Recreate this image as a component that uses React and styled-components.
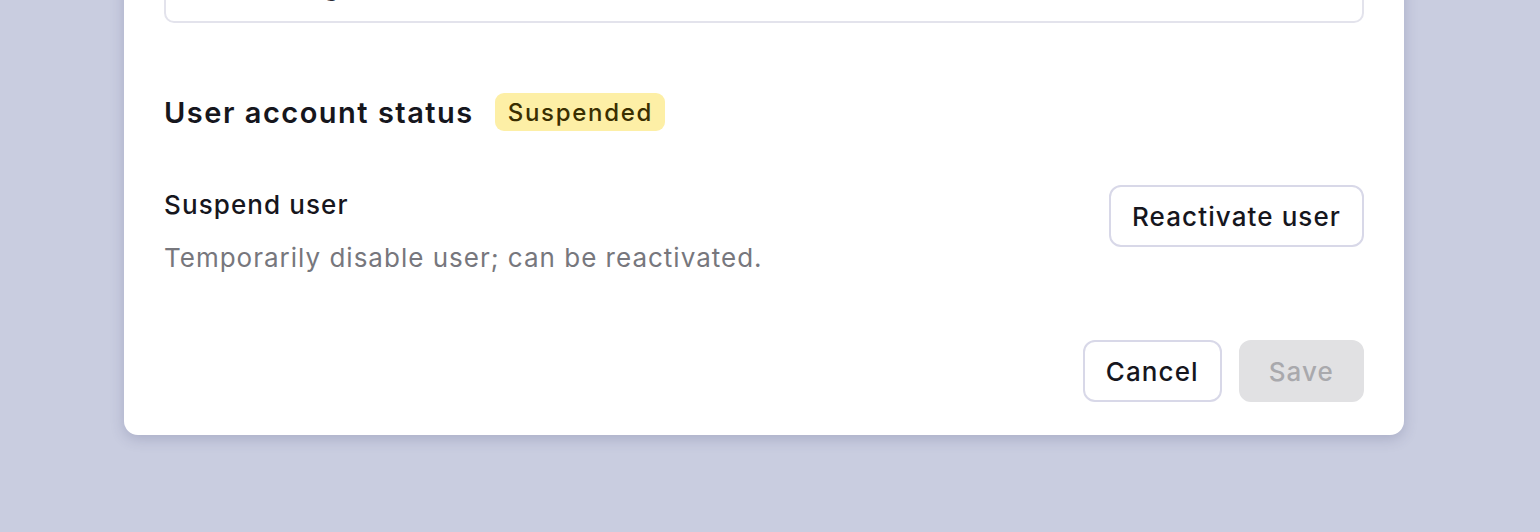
import React from "react";
import styled, { createGlobalStyle } from "styled-components";

const GlobalStyle = createGlobalStyle`
  html, body {
    margin: 0;
    padding: 0;
    background: #c9cde0;
    font-family: Inter, "Noto Sans", "Liberation Sans", sans-serif;
    color: #16161d;
  }
  #root {
    height: 532px;
    overflow: hidden;
  }
`;

const Page = styled.div`
  height: 532px;
  padding: 0 136px 0 124px;
  box-sizing: border-box;
  overflow: hidden;
`;

const Card = styled.div`
  margin-top: -79px;
  background: #fff;
  border-radius: 14px;
  padding: 40px 40px 33px;
  box-shadow: 0 4px 14px rgba(60, 64, 110, 0.22);
  display: flex;
  flex-direction: column;
`;

const Input = styled.input`
  height: 62px;
  box-sizing: border-box;
  border: 2px solid #e3e3ec;
  border-radius: 10px;
  padding: 0 24px 13px;
  font: inherit;
  font-size: 26px;
  color: #2a2a33;
  outline: none;
  background: #fff;
`;

const Section = styled.section`
  margin-top: 70px;
  display: flex;
  flex-direction: column;
  gap: 54px;
`;

const Heading = styled.div`
  display: flex;
  align-items: center;
  gap: 21px;
  height: 38px;
`;

const Title = styled.h3`
  margin: 0;
  font-size: 29px;
  font-weight: 600;
  letter-spacing: 1.5px;
  color: #16161d;
`;

const Badge = styled.span`
  display: inline-flex;
  align-items: center;
  height: 38px;
  padding: 0 12px 0 13px;
  border-radius: 9px;
  background: ${({ $tone }) => ($tone === "warn" ? "#fdefa6" : "#e6e6ee")};
  color: ${({ $tone }) => ($tone === "warn" ? "#3a2e00" : "#333")};
  font-size: 24px;
  font-weight: 500;
  letter-spacing: 1.7px;
`;

const Row = styled.div`
  display: flex;
  justify-content: space-between;
  align-items: flex-start;
`;

const Info = styled.div`
  display: flex;
  flex-direction: column;
  gap: 19px;
`;

const Label = styled.div`
  font-size: 26px;
  font-weight: 500;
  line-height: 34px;
  margin-top: 3px;
  letter-spacing: 1.1px;
  color: #16161d;
`;

const Hint = styled.div`
  font-size: 26px;
  line-height: 34px;
  letter-spacing: 1px;
  color: #77777d;
`;

const Footer = styled.div`
  margin-top: 65px;
  display: flex;
  justify-content: flex-end;
  gap: 17px;
`;

const Button = styled.button`
  height: 62px;
  box-sizing: border-box;
  padding: 0 ${({ $pad }) => $pad || 20}px;
  border-radius: 12px;
  font: inherit;
  font-size: 26px;
  font-weight: 500;
  letter-spacing: 1.1px;
  cursor: pointer;
  border: 2px solid ${({ disabled }) => (disabled ? "#e1e1e3" : "#d8d8e8")};
  background: ${({ disabled }) => (disabled ? "#e1e1e3" : "#fff")};
  color: ${({ disabled }) => (disabled ? "#a9a9ad" : "#16161d")};
`;

export default function App() {
  return (
    <>
      <GlobalStyle />
      <Page>
        <Card>
          <Input defaultValue="jenny.young@company.io" readOnly />
          <Section>
            <Heading>
              <Title>User account status</Title>
              <Badge $tone="warn">Suspended</Badge>
            </Heading>
            <Row>
              <Info>
                <Label>Suspend user</Label>
                <Hint>Temporarily disable user; can be reactivated.</Hint>
              </Info>
              <Button $pad={21}>Reactivate user</Button>
            </Row>
          </Section>
          <Footer>
            <Button $pad={21}>Cancel</Button>
            <Button disabled $pad={28}>
              Save
            </Button>
          </Footer>
        </Card>
      </Page>
    </>
  );
}
